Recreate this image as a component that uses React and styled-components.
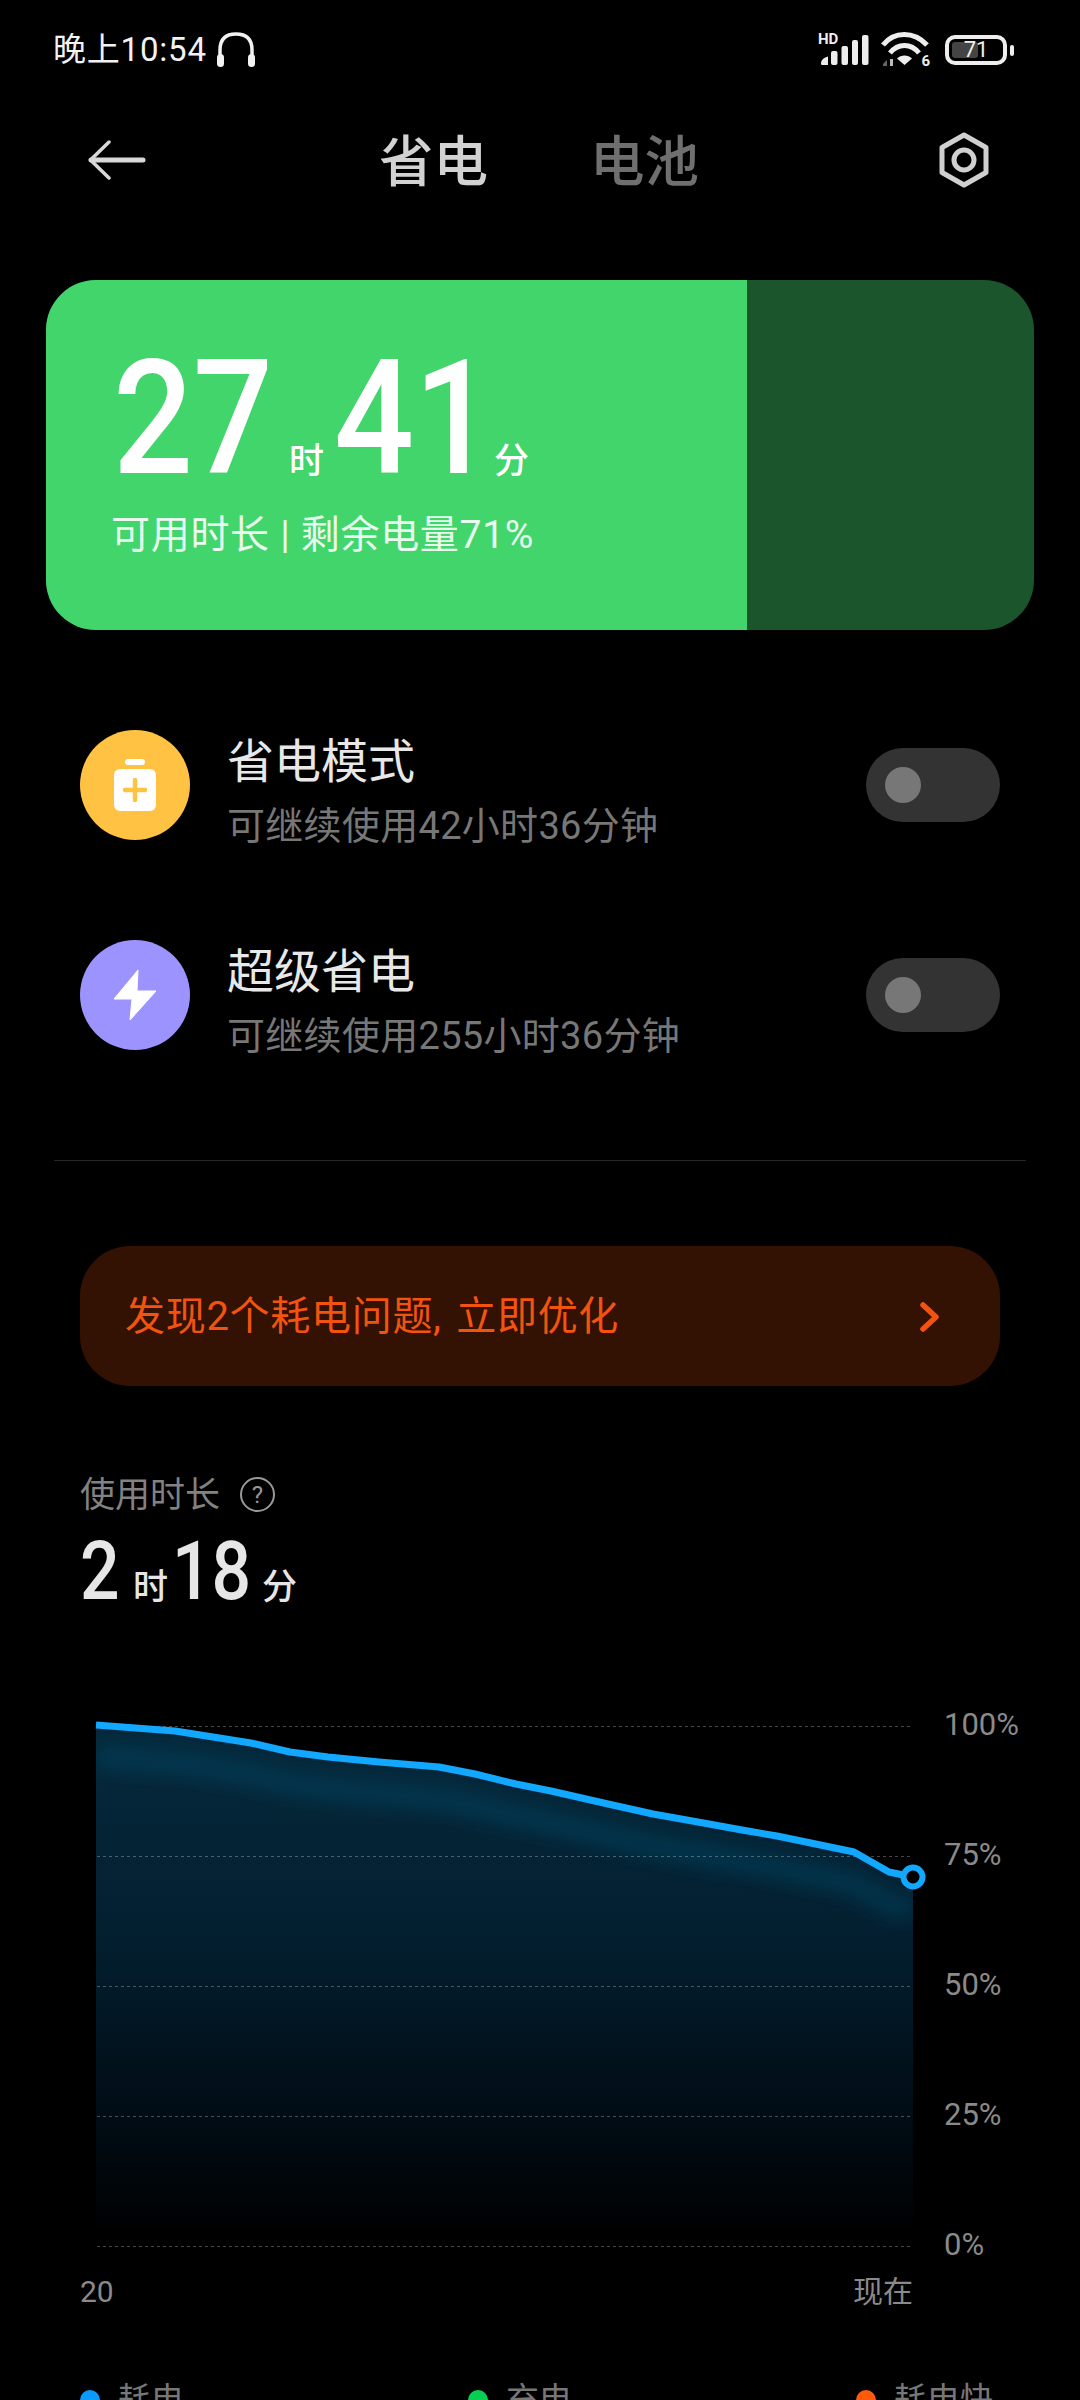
import styled, { createGlobalStyle } from "styled-components";

const GlobalStyle = createGlobalStyle`
  html, body {
    margin: 0;
    padding: 0;
    background: #000;
    overflow: hidden;
  }
  * {
    box-sizing: border-box;
  }
`;

const FONT = `Roboto, "Noto Sans CJK SC", sans-serif`;

const LINE = [
  [96, 1725], [175, 1731], [251, 1743], [290, 1752], [328, 1757], [379, 1762],
  [439, 1767], [475, 1774], [516, 1784], [551, 1791], [608, 1804], [653, 1814],
  [698, 1822], [742, 1830], [777, 1836], [806, 1842], [854, 1852], [889, 1872],
  [913, 1877],
];
const linePath = LINE.map(([x, y], i) => `${i ? "L" : "M"}${x} ${y}`).join(" ");
const bandPath = LINE.map(([x, y], i) => `${i ? "L" : "M"}${x} ${y + 32}`).join(" ");
const areaPath = `${linePath} L913 2226 L96 2226 Z`;
const GRID = [1726, 1856, 1986, 2116, 2246];

function Headphones() {
  return (
    <svg width="42" height="38" viewBox="0 0 42 38" fill="none">
      <path d="M5 28V19C5 8 11 3 21 3S37 8 37 19V28" stroke="#f2f2f2" strokeWidth="3.500" />
      <rect x="2" y="23" width="7" height="13" rx="3.500" fill="#f2f2f2" />
      <rect x="33" y="23" width="7" height="13" rx="3.500" fill="#f2f2f2" />
    </svg>
  );
}

function Signal() {
  return (
    <svg width="50" height="32" viewBox="0 0 50 32" fill="#eee">
      <path d="M1 29.5C1 26 4 23.5 8 22.5V31H2.5C1.500 31 1 30.500 1 29.500Z" />
      <rect x="11" y="17" width="6.500" height="14" rx="2" />
      <rect x="21.500" y="12" width="6.500" height="19" rx="2" />
      <rect x="32" y="6" width="6" height="25" rx="2" />
      <rect x="42" y="1" width="6.500" height="30" rx="2" />
    </svg>
  );
}

function Wifi() {
  return (
    <svg width="48" height="36" viewBox="0 0 48 36" fill="none">
      <path d="M2 13C13 -1 33 -1 46 13" stroke="#eee" strokeWidth="5" />
      <path d="M9 21C17 11 30 11 38 21" stroke="#eee" strokeWidth="5" />
      <path d="M23.500 33L16 26.500C20 22.500 27 22.500 31 26.500Z" fill="#eee" />
      <path d="M2 32L6 28V34H2Z" fill="#666" />
      <path d="M9 27H12V34H9Z" fill="#bbb" />
    </svg>
  );
}

function BackArrow() {
  return (
    <svg width="58" height="40" viewBox="0 0 58 40" fill="none" stroke="#d8d8d8" strokeLinecap="round">
      <path d="M3 20H55" strokeWidth="5" />
      <path d="M21 2L2.500 20L21 38" strokeWidth="3.500" strokeLinejoin="round" />
    </svg>
  );
}

function SettingsHex() {
  return (
    <svg width="52" height="56" viewBox="0 0 52 56" fill="none" stroke="#d0d0d0" strokeWidth="5">
      <path d="M26 3L48 15.500V40.500L26 53L4 40.500V15.500Z" strokeLinejoin="round" />
      <circle cx="26" cy="28" r="10" />
    </svg>
  );
}

function BatteryPlus() {
  return (
    <svg width="44" height="52" viewBox="0 0 44 52">
      <rect x="12" y="0" width="20" height="6" rx="3" fill="#fff" />
      <rect x="1" y="10" width="42" height="42" rx="6" fill="#fff" />
      <path d="M22 21V41M12 31H32" stroke="#FFC242" strokeWidth="4.500" strokeLinecap="round" />
    </svg>
  );
}

function Bolt() {
  return (
    <svg width="44" height="52" viewBox="0 0 44 52">
      <path d="M25 1L1 30H19L17 51L43 22H24Z" fill="#fff" strokeLinejoin="round" stroke="#fff" strokeWidth="1" />
    </svg>
  );
}

function Chevron() {
  return (
    <svg width="20" height="30" viewBox="0 0 20 30" fill="none">
      <path d="M3 3L16 15L3 27" stroke="#F2540F" strokeWidth="5.500" strokeLinecap="round" strokeLinejoin="round" />
    </svg>
  );
}

function Chart() {
  return (
    <svg width="880" height="560" viewBox="80 1700 880 560" fill="none">
      <defs>
        <linearGradient id="area" x1="0" y1="1725" x2="0" y2="2226" gradientUnits="userSpaceOnUse">
          <stop offset="0" stopColor="#05293c" />
          <stop offset="0.4" stopColor="#032031" />
          <stop offset="0.75" stopColor="#010e17" />
          <stop offset="1" stopColor="#000103" />
        </linearGradient>
        <clipPath id="areaClip">
          <path d={areaPath} />
        </clipPath>
        <filter id="soft" x="-10%" y="-30%" width="120%" height="160%">
          <feGaussianBlur stdDeviation="9" />
        </filter>
      </defs>
      <path d={areaPath} fill="url(#area)" />
      <g clipPath="url(#areaClip)">
        <path d={bandPath} stroke="#0a4a68" strokeOpacity="0.45" strokeWidth="22" filter="url(#soft)" />
      </g>
      {GRID.map((y) => (
        <path key={y} d={`M97 ${y + 0.5}H913`} stroke="#fff" strokeOpacity="0.28" strokeDasharray="3 3" />
      ))}
      <path d={linePath} stroke="#12A8FF" strokeWidth="7" strokeLinejoin="round" />
      <circle cx="913" cy="1877" r="9.500" fill="#000" stroke="#12A8FF" strokeWidth="6" />
    </svg>
  );
}

function PowerRow({ color, icon, title, subtitle }) {
  return (
    <Row>
      <RoundIcon $color={color}>{icon}</RoundIcon>
      <RowText>
        <RowTitle>{title}</RowTitle>
        <RowSub>{subtitle}</RowSub>
      </RowText>
      <Toggle>
        <Knob />
      </Toggle>
    </Row>
  );
}

function App() {
  return (
    <Page>
      <GlobalStyle />
      <StatusBar>
        <StatusLeft>
          <Clock>晚上10:54</Clock>
          <Headphones />
        </StatusLeft>
        <StatusRight>
          <SignalWrap>
            <Hd>HD</Hd>
            <Signal />
          </SignalWrap>
          <WifiWrap>
            <Wifi />
            <WifiSix>6</WifiSix>
          </WifiWrap>
          <BatteryBody>
            <BatteryFill $level={71} />
            <BatteryText>71</BatteryText>
          </BatteryBody>
          <BatteryNub />
        </StatusRight>
      </StatusBar>

      <NavBar>
        <NavLeft>
          <BackArrow />
        </NavLeft>
        <Tabs>
          <Tab $active>省电</Tab>
          <Tab>电池</Tab>
        </Tabs>
        <NavRight>
          <SettingsHex />
        </NavRight>
      </NavBar>

      <Card>
        <CardFill $level={71}>
          <TimeLine>
            <BigNum>27</BigNum>
            <BigUnit $left={18}>时</BigUnit>
            <BigNum $left={10}>41</BigNum>
            <BigUnit $left={2}>分</BigUnit>
          </TimeLine>
          <CardSub>可用时长 | 剩余电量71%</CardSub>
        </CardFill>
      </Card>

      <Rows>
        <PowerRow color="#FFC242" icon={<BatteryPlus />} title="省电模式" subtitle="可继续使用42小时36分钟" />
        <PowerRow color="#9D93FF" icon={<Bolt />} title="超级省电" subtitle="可继续使用255小时36分钟" />
      </Rows>

      <Divider />

      <Banner>
        <BannerText>发现2个耗电问题, 立即优化</BannerText>
        <Chevron />
      </Banner>

      <Usage>
        <UsageLabel>
          使用时长
          <HelpMark>?</HelpMark>
        </UsageLabel>
        <UsageValue>
          <MidNum $width={39}>2</MidNum>
          <MidUnit $left={14}>时</MidUnit>
          <MidNum $width={78} $left={4}>18</MidNum>
          <MidUnit $left={12}>分</MidUnit>
        </UsageValue>
      </Usage>

      <ChartRow>
        <Chart />
        <AxisLabels>
          <AxisLabel>100%</AxisLabel>
          <AxisLabel>75%</AxisLabel>
          <AxisLabel>50%</AxisLabel>
          <AxisLabel>25%</AxisLabel>
          <AxisLabel>0%</AxisLabel>
        </AxisLabels>
      </ChartRow>

      <TimeAxis>
        <span>20</span>
        <span>现在</span>
      </TimeAxis>

      <Legend>
        <LegendItem>
          <LegendDot $color="#0A9BFF" />
          耗电
        </LegendItem>
        <LegendItem>
          <LegendDot $color="#05CF52" />
          充电
        </LegendItem>
        <LegendItem>
          <LegendDot $color="#FF5A0A" />
          耗电快
        </LegendItem>
      </Legend>
    </Page>
  );
}

const Page = styled.div`
  width: 1080px;
  height: 2400px;
  overflow: hidden;
  background: #000;
  font-family: ${FONT};
  color: #fff;
`;

const StatusBar = styled.div`
  height: 100px;
  padding: 0 66px 0 53px;
  display: flex;
  align-items: center;
  justify-content: space-between;
`;
const StatusLeft = styled.div`
  display: flex;
  align-items: center;
  gap: 8px;
`;
const Clock = styled.span`
  font-size: 33px;
  line-height: 40px;
  letter-spacing: 0.8px;
  color: #f2f2f2;
`;
const StatusRight = styled.div`
  display: flex;
  align-items: center;
`;
const SignalWrap = styled.div`
  position: relative;
  width: 50px;
  height: 32px;
`;
const Hd = styled.span`
  position: absolute;
  left: -2px;
  top: -2px;
  font-size: 15px;
  line-height: 15px;
  font-weight: 700;
  color: #eee;
  background: #000;
  padding-right: 1px;
`;
const WifiWrap = styled.div`
  position: relative;
  width: 48px;
  height: 36px;
  margin-left: 11px;
`;
const WifiSix = styled.span`
  position: absolute;
  right: -1px;
  bottom: -1px;
  font-size: 15px;
  line-height: 15px;
  font-weight: 700;
  color: #eee;
`;
const BatteryBody = styled.div`
  position: relative;
  width: 62px;
  height: 30px;
  margin-left: 16px;
  border: 4px solid #eee;
  border-radius: 10px;
  display: flex;
  align-items: center;
  justify-content: center;
`;
const BatteryFill = styled.div`
  position: absolute;
  left: 3px;
  top: 3px;
  bottom: 3px;
  width: ${(p) => p.$level * 0.68}%;
  background: #444;
  border-radius: 3px;
`;
const BatteryText = styled.span`
  position: relative;
  font-size: 22px;
  line-height: 22px;
  color: #eee;
`;
const BatteryNub = styled.div`
  width: 4px;
  height: 11px;
  margin-left: 3px;
  background: #eee;
  border-radius: 2px;
`;

const NavBar = styled.div`
  height: 120px;
  padding: 4px 90px 0 88px;
  display: grid;
  grid-template-columns: 1fr auto 1fr;
  align-items: center;
`;
const NavLeft = styled.div`
  display: flex;
  justify-content: flex-start;
  margin-top: -4px;
`;
const NavRight = styled.div`
  display: flex;
  justify-content: flex-end;
  margin-top: -4px;
`;
const Tabs = styled.div`
  display: flex;
  gap: 102px;
`;
const Tab = styled.span`
  font-size: 54.500px;
  line-height: 64px;
  font-weight: 500;
  color: ${(p) => (p.$active ? "#d2d2d2" : "#6f6f6f")};
`;

const Card = styled.div`
  height: 350px;
  margin: 60px 46px 0;
  border-radius: 50px;
  background: #1a552b;
  overflow: hidden;
`;
const CardFill = styled.div`
  height: 100%;
  width: ${(p) => p.$level}%;
  background: #41d56c;
  padding: 73px 0 0 66px;
`;
const TimeLine = styled.div`
  display: flex;
  align-items: baseline;
  height: 132px;
  margin-left: 1px;
`;
const BigNum = styled.span`
  display: inline-block;
  width: 158px;
  margin-left: ${(p) => p.$left || 0}px;
  font-size: 160px;
  font-weight: 500;
  line-height: 132px;
  transform: scaleX(0.88);
  transform-origin: left;
`;
const BigUnit = styled.span`
  font-size: 35px;
  font-weight: 500;
  line-height: 40px;
  margin-left: ${(p) => p.$left}px;
`;
const CardSub = styled.div`
  margin: 27px 0 0 -1px;
  font-size: 39px;
  line-height: 46px;
  letter-spacing: 0.7px;
  white-space: nowrap;
  color: #e9fbee;
`;

const Rows = styled.div`
  margin-top: 100px;
  padding: 0 80px;
  display: flex;
  flex-direction: column;
  gap: 100px;
`;
const Row = styled.div`
  height: 110px;
  display: flex;
  align-items: center;
`;
const RoundIcon = styled.div`
  width: 110px;
  height: 110px;
  border-radius: 50%;
  background: ${(p) => p.$color};
  display: flex;
  align-items: center;
  justify-content: center;
  flex-shrink: 0;
`;
const RowText = styled.div`
  flex: 1;
  margin-left: 37px;
  padding-top: 11px;
  display: flex;
  flex-direction: column;
  gap: 14px;
`;
const RowTitle = styled.div`
  font-size: 47px;
  line-height: 56px;
  color: #e8e8e8;
`;
const RowSub = styled.div`
  font-size: 38px;
  line-height: 44px;
  letter-spacing: 0.3px;
  color: #777;
`;
const Toggle = styled.div`
  width: 134px;
  height: 74px;
  border-radius: 37px;
  background: #333;
  padding: 19px;
  flex-shrink: 0;
`;
const Knob = styled.div`
  width: 36px;
  height: 36px;
  border-radius: 50%;
  background: #777;
`;

const Divider = styled.div`
  height: 1px;
  margin: 110px 54px 0;
  background: #262626;
`;

const Banner = styled.div`
  height: 140px;
  margin: 85px 80px 0;
  padding: 2px 60px 0 45px;
  border-radius: 50px;
  background: #331103;
  display: flex;
  align-items: center;
  justify-content: space-between;
`;
const BannerText = styled.span`
  font-size: 40px;
  line-height: 46px;
  letter-spacing: 0.7px;
  word-spacing: 4px;
  color: #f2540f;
`;

const Usage = styled.div`
  margin-top: 88px;
  padding: 0 80px;
`;
const UsageLabel = styled.div`
  display: flex;
  align-items: center;
  gap: 20px;
  height: 44px;
  font-size: 35px;
  line-height: 44px;
  color: #828282;
`;
const HelpMark = styled.span`
  width: 35px;
  height: 35px;
  margin-top: -3px;
  border: 2.500px solid #999;
  border-radius: 50%;
  display: flex;
  align-items: center;
  justify-content: center;
  font-size: 24px;
  line-height: 1;
  color: #999;
`;
const UsageValue = styled.div`
  display: flex;
  align-items: baseline;
  margin-top: 18px;
  height: 70px;
`;
const MidNum = styled.span`
  display: inline-block;
  width: ${(p) => p.$width}px;
  margin-left: ${(p) => p.$left || 0}px;
  font-size: 82px;
  font-weight: 500;
  line-height: 70px;
  transform: scaleX(0.85);
  transform-origin: left;
  color: #e6e6e6;
`;
const MidUnit = styled.span`
  font-size: 35px;
  font-weight: 500;
  line-height: 40px;
  color: #e6e6e6;
  margin-left: ${(p) => p.$left}px;
`;

const ChartRow = styled.div`
  display: flex;
  margin-top: 94px;
  padding-left: 80px;
  height: 560px;
`;
const AxisLabels = styled.div`
  margin: -41px 0 0 -16px;
  display: flex;
  flex-direction: column;
`;
const AxisLabel = styled.div`
  height: 130px;
  flex-shrink: 0;
  display: flex;
  align-items: center;
  font-size: 31px;
  color: #8a8a8a;
`;

const TimeAxis = styled.div`
  width: 833px;
  margin: 12px 0 0 80px;
  display: flex;
  justify-content: space-between;
  font-size: 30px;
  line-height: 40px;
  color: #8a8a8a;
`;

const Legend = styled.div`
  margin: 68px 0 0 80px;
  display: grid;
  grid-template-columns: repeat(3, 388px);
`;
const LegendItem = styled.div`
  display: flex;
  align-items: center;
  gap: 18px;
  font-size: 33px;
  line-height: 40px;
  color: #777;
`;
const LegendDot = styled.span`
  width: 20px;
  height: 20px;
  border-radius: 50%;
  background: ${(p) => p.$color};
`;

export default App;
